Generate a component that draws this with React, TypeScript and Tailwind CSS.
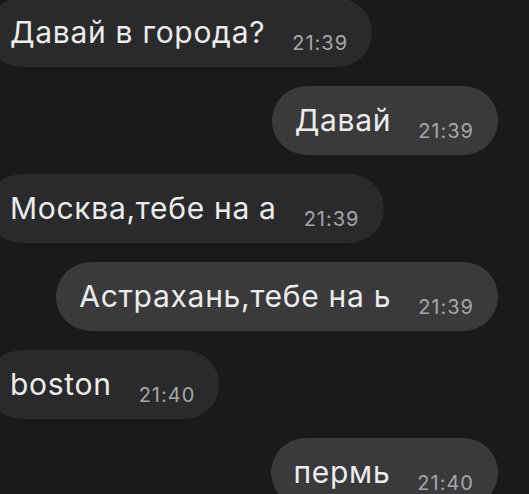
import React from "react";

type Msg = { text: string; time: string; out: boolean };

const messages: Msg[] = [
  { text: "Давай в города?", time: "21:39", out: false },
  { text: "Давай", time: "21:39", out: true },
  { text: "Москва,тебе на а", time: "21:39", out: false },
  { text: "Астрахань,тебе на ь", time: "21:39", out: true },
  { text: "boston", time: "21:40", out: false },
  { text: "пермь", time: "21:40", out: true },
];

function Bubble({ msg }: { msg: Msg }) {
  return (
    <div className={msg.out ? "flex justify-end pr-[31px]" : "flex justify-start -ml-[13px]"}>
      <div
        className={
          "flex items-baseline h-[69px] rounded-full pl-[23px] pr-[24px] pt-[6px] " +
          (msg.out ? "bg-[#3a3a3c]" : "bg-[#2a2a2c]")
        }
      >
        <span className="text-[30px] tracking-[0.7px] leading-[57px] text-[#ececec] whitespace-nowrap">
          {msg.text}
        </span>
        <span className="ml-[27px] text-[20px] tracking-[1px] text-[#a6a6a8] translate-y-[7px] whitespace-nowrap">
          {msg.time}
        </span>
      </div>
    </div>
  );
}

export default function App() {
  return (
    <div
      className="w-[529px] h-[494px] overflow-hidden bg-[#1a1a1c]"
      style={{ fontFamily: "Inter, 'Noto Sans', sans-serif" }}
    >
      <div className="flex flex-col gap-[19px] -mt-[2px]">
        {messages.map((m, i) => (
          <Bubble key={i} msg={m} />
        ))}
      </div>
    </div>
  );
}
